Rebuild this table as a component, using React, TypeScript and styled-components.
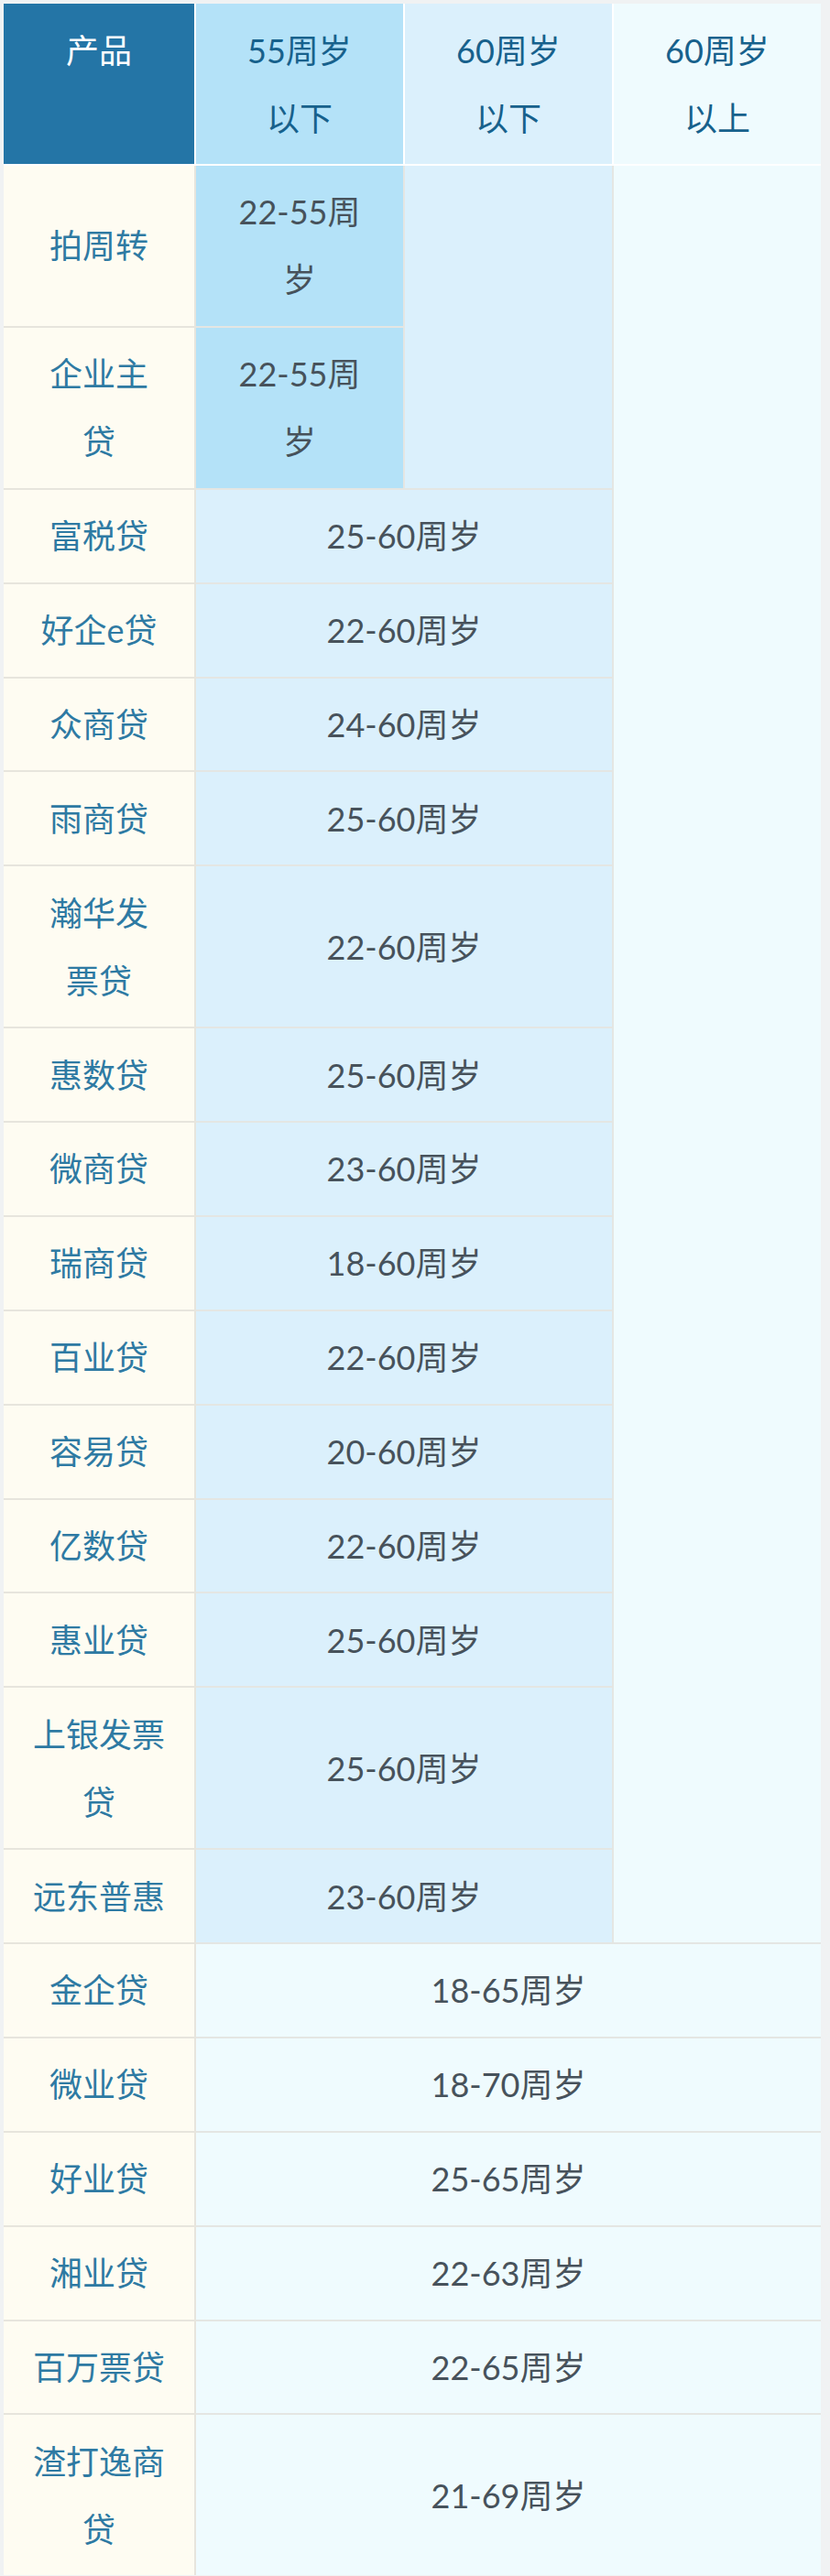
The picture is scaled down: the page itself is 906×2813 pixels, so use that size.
import styled, { createGlobalStyle } from "styled-components";

const GlobalStyle = createGlobalStyle`
  html, body {
    margin: 0;
    padding: 0;
    background: #f0f2f3;
  }
`;

type Tone = "deep" | "mid" | "pale";

const toneColors: Record<Tone, string> = {
  deep: "#b4e2f8",
  mid: "#dbf0fc",
  pale: "#effbfe",
};

const Page = styled.div`
  padding: 4px 10px 5px 4px;
  font-family: "Lato", "Noto Sans CJK SC", sans-serif;
`;

const Table = styled.table`
  width: 892px;
  table-layout: fixed;
  border-collapse: collapse;
  font-size: 36px;
  line-height: 74px;
  text-align: center;
`;

const HeadCell = styled.th<{ $tone?: Tone }>`
  background: ${(p) => (p.$tone ? toneColors[p.$tone] : "#2475a6")};
  color: ${(p) => (p.$tone ? "#17618c" : "#ffffff")};
  font-weight: 400;
  vertical-align: top;
  padding: 13.5px 0;
  border: 2px solid #ffffff;
  border-top: none;
  white-space: pre-line;
  &:first-child {
    border-left: none;
  }
  &:last-child {
    border-right: none;
  }
`;

const NameCell = styled.td`
  background: #fefcf2;
  color: #2e7aa3;
  padding: 13.45px 0;
  border: 2px solid #e7e5dd;
  border-left: none;
  white-space: pre-line;
`;

const ValueCell = styled.td<{ $tone: Tone }>`
  background: ${(p) => toneColors[p.$tone]};
  color: #47525b;
  padding: 13.45px 0;
  border: 2px solid #e4e6e3;
  white-space: pre-line;
  &:last-child {
    border-right: none;
  }
`;

const BodyRow = styled.tr`
  &:last-child td {
    border-bottom: none;
  }
`;

const sixtyRows: [string, string][] = [
  ["富税贷", "25-60周岁"],
  ["好企e贷", "22-60周岁"],
  ["众商贷", "24-60周岁"],
  ["雨商贷", "25-60周岁"],
  ["瀚华发\n票贷", "22-60周岁"],
  ["惠数贷", "25-60周岁"],
  ["微商贷", "23-60周岁"],
  ["瑞商贷", "18-60周岁"],
  ["百业贷", "22-60周岁"],
  ["容易贷", "20-60周岁"],
  ["亿数贷", "22-60周岁"],
  ["惠业贷", "25-60周岁"],
  ["上银发票\n贷", "25-60周岁"],
  ["远东普惠", "23-60周岁"],
];

const olderRows: [string, string][] = [
  ["金企贷", "18-65周岁"],
  ["微业贷", "18-70周岁"],
  ["好业贷", "25-65周岁"],
  ["湘业贷", "22-63周岁"],
  ["百万票贷", "22-65周岁"],
  ["渣打逸商\n贷", "21-69周岁"],
];

export default function App() {
  return (
    <Page>
      <GlobalStyle />
      <Table>
        <colgroup>
          <col style={{ width: 209 }} />
          <col style={{ width: 228 }} />
          <col style={{ width: 228 }} />
          <col style={{ width: 227 }} />
        </colgroup>
        <thead>
          <tr>
            <HeadCell>产品</HeadCell>
            <HeadCell $tone="deep">{"55周岁\n以下"}</HeadCell>
            <HeadCell $tone="mid">{"60周岁\n以下"}</HeadCell>
            <HeadCell $tone="pale">{"60周岁\n以上"}</HeadCell>
          </tr>
        </thead>
        <tbody>
          <BodyRow>
            <NameCell>拍周转</NameCell>
            <ValueCell $tone="deep">{"22-55周\n岁"}</ValueCell>
            <ValueCell $tone="mid" rowSpan={2} />
            <ValueCell $tone="pale" rowSpan={16} />
          </BodyRow>
          <BodyRow>
            <NameCell>{"企业主\n贷"}</NameCell>
            <ValueCell $tone="deep">{"22-55周\n岁"}</ValueCell>
          </BodyRow>
          {sixtyRows.map(([name, age]) => (
            <BodyRow key={name}>
              <NameCell>{name}</NameCell>
              <ValueCell $tone="mid" colSpan={2}>
                {age}
              </ValueCell>
            </BodyRow>
          ))}
          {olderRows.map(([name, age]) => (
            <BodyRow key={name}>
              <NameCell>{name}</NameCell>
              <ValueCell $tone="pale" colSpan={3}>
                {age}
              </ValueCell>
            </BodyRow>
          ))}
        </tbody>
      </Table>
    </Page>
  );
}
